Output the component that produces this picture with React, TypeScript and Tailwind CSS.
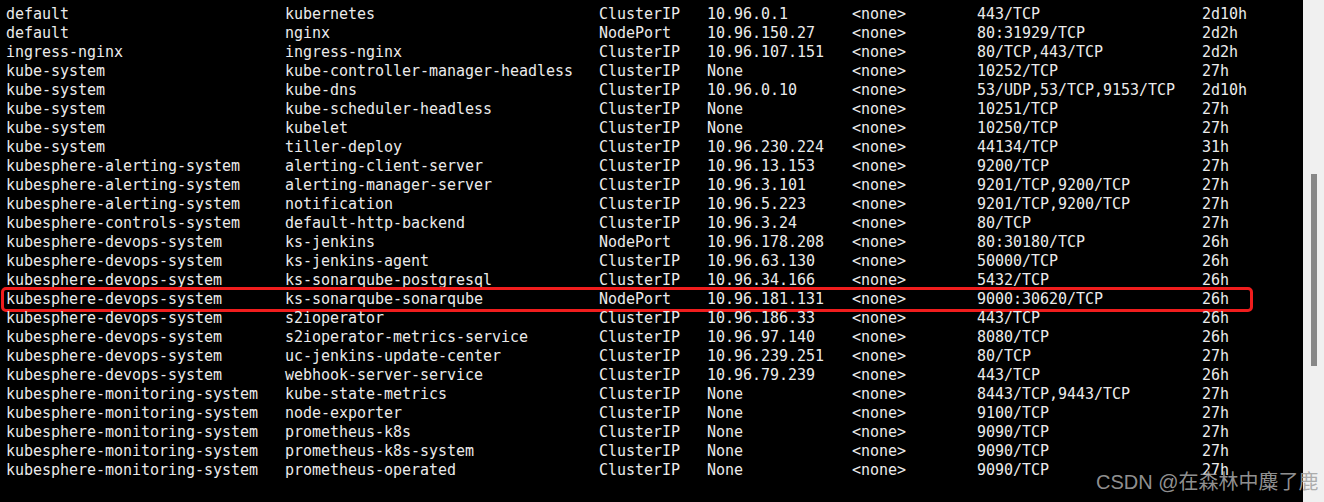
import React from "react";

type Svc = [string, string, string, string, string, string, string];

const services: Svc[] = [
  ["default", "kubernetes", "ClusterIP", "10.96.0.1", "<none>", "443/TCP", "2d10h"],
  ["default", "nginx", "NodePort", "10.96.150.27", "<none>", "80:31929/TCP", "2d2h"],
  ["ingress-nginx", "ingress-nginx", "ClusterIP", "10.96.107.151", "<none>", "80/TCP,443/TCP", "2d2h"],
  ["kube-system", "kube-controller-manager-headless", "ClusterIP", "None", "<none>", "10252/TCP", "27h"],
  ["kube-system", "kube-dns", "ClusterIP", "10.96.0.10", "<none>", "53/UDP,53/TCP,9153/TCP", "2d10h"],
  ["kube-system", "kube-scheduler-headless", "ClusterIP", "None", "<none>", "10251/TCP", "27h"],
  ["kube-system", "kubelet", "ClusterIP", "None", "<none>", "10250/TCP", "27h"],
  ["kube-system", "tiller-deploy", "ClusterIP", "10.96.230.224", "<none>", "44134/TCP", "31h"],
  ["kubesphere-alerting-system", "alerting-client-server", "ClusterIP", "10.96.13.153", "<none>", "9200/TCP", "27h"],
  ["kubesphere-alerting-system", "alerting-manager-server", "ClusterIP", "10.96.3.101", "<none>", "9201/TCP,9200/TCP", "27h"],
  ["kubesphere-alerting-system", "notification", "ClusterIP", "10.96.5.223", "<none>", "9201/TCP,9200/TCP", "27h"],
  ["kubesphere-controls-system", "default-http-backend", "ClusterIP", "10.96.3.24", "<none>", "80/TCP", "27h"],
  ["kubesphere-devops-system", "ks-jenkins", "NodePort", "10.96.178.208", "<none>", "80:30180/TCP", "26h"],
  ["kubesphere-devops-system", "ks-jenkins-agent", "ClusterIP", "10.96.63.130", "<none>", "50000/TCP", "26h"],
  ["kubesphere-devops-system", "ks-sonarqube-postgresql", "ClusterIP", "10.96.34.166", "<none>", "5432/TCP", "26h"],
  ["kubesphere-devops-system", "ks-sonarqube-sonarqube", "NodePort", "10.96.181.131", "<none>", "9000:30620/TCP", "26h"],
  ["kubesphere-devops-system", "s2ioperator", "ClusterIP", "10.96.186.33", "<none>", "443/TCP", "26h"],
  ["kubesphere-devops-system", "s2ioperator-metrics-service", "ClusterIP", "10.96.97.140", "<none>", "8080/TCP", "26h"],
  ["kubesphere-devops-system", "uc-jenkins-update-center", "ClusterIP", "10.96.239.251", "<none>", "80/TCP", "27h"],
  ["kubesphere-devops-system", "webhook-server-service", "ClusterIP", "10.96.79.239", "<none>", "443/TCP", "26h"],
  ["kubesphere-monitoring-system", "kube-state-metrics", "ClusterIP", "None", "<none>", "8443/TCP,9443/TCP", "27h"],
  ["kubesphere-monitoring-system", "node-exporter", "ClusterIP", "None", "<none>", "9100/TCP", "27h"],
  ["kubesphere-monitoring-system", "prometheus-k8s", "ClusterIP", "None", "<none>", "9090/TCP", "27h"],
  ["kubesphere-monitoring-system", "prometheus-k8s-system", "ClusterIP", "None", "<none>", "9090/TCP", "27h"],
  ["kubesphere-monitoring-system", "prometheus-operated", "ClusterIP", "None", "<none>", "9090/TCP", "27h"],
];

const HIGHLIGHT = 15;

const Row = ({ svc, highlight }: { svc: Svc; highlight?: boolean }) => (
  <div className="relative grid grid-cols-[279px_314px_108px_145px_125px_225px_auto] pl-[6px] h-[19px] leading-[19px] whitespace-pre">
    {svc.map((cell, i) => (
      <span key={i}>{cell}</span>
    ))}
    {highlight ? (
      <span className="absolute left-[1px] -top-[3px] h-[25px] w-[1252px] rounded-[5px] border-[3px] border-[#f01d1d]" />
    ) : null}
  </div>
);

export default function App() {
  return (
    <div className="relative flex h-[502px] w-[1324px] overflow-hidden bg-black">
      <div className="flex-1 pt-[5px] font-['DejaVu_Sans_Mono',monospace] text-[15px] tracking-[-0.03px] text-[#ebebeb]">
        {services.map((svc, i) => (
          <Row key={i} svc={svc} highlight={i === HIGHLIGHT} />
        ))}
      </div>
      <div className="w-[21px] shrink-0 bg-[#f0f0f0] pl-[8px] pt-[174px]">
        <div className="h-[192px] w-[6px] bg-[#888888]" />
      </div>
      <span className="absolute left-[1096px] top-[470px] font-['Liberation_Sans','Noto_Sans_CJK_SC',sans-serif] text-[20px] leading-[24px] text-[#a3a3a3]/90 whitespace-nowrap">
        CSDN @在森林中麋了鹿
      </span>
    </div>
  );
}
